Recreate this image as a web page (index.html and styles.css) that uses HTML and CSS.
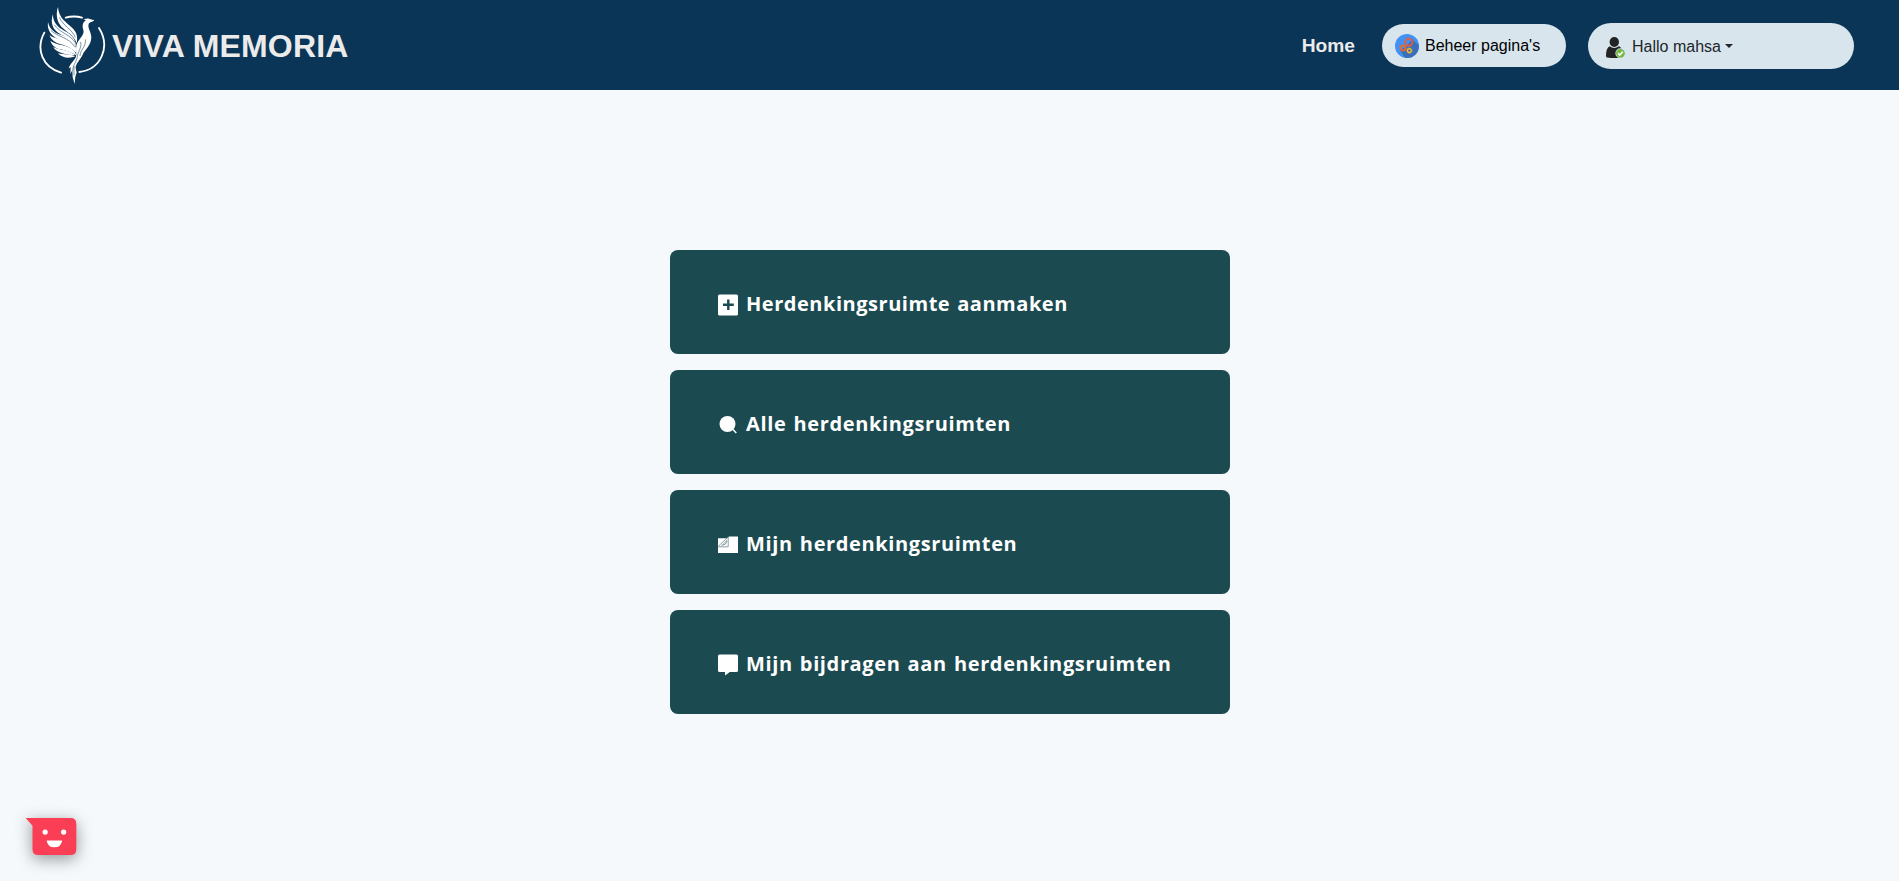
FILE: index.html
```html
<!DOCTYPE html>
<html lang="nl">
<head>
<meta charset="utf-8">
<title>Viva Memoria</title>
<link rel="stylesheet" href="styles.css">
</head>
<body>
<header class="navbar">
  <a class="brand">
    <svg class="brand-logo" viewBox="24 18 204 240" fill="#fff">
      <g fill="none" stroke="#fff" stroke-width="5.5" stroke-linecap="round">
        <path d="M107 53Q132 46 156 53"/>
        <path d="M43 98C16 148 38 202 93 218"/>
        <path d="M207 84C242 140 214 208 148 216"/>
      </g>
      <path d="M84 21C86 54 108 66 127 84C140 96 144 110 140 130C132 104 112 98 94 80C82 66 76 44 84 21Z"/>
      <path d="M69 43C68 68 84 82 104 93C124 103 138 118 138 140C126 116 108 112 90 102C68 90 60 68 69 43Z"/>
      <path d="M54 66C58 88 76 101 100 107C122 112 136 126 139 150C122 128 106 126 88 119C66 110 50 92 54 66Z"/>
      <path d="M58 106C76 117 98 118 112 124C130 131 140 144 141 160C124 144 108 137 92 133C76 129 64 120 58 106Z"/>
      <path d="M61 122C80 135 98 134 112 140C126 145 136 152 139 166C120 156 108 151 92 148C76 145 65 135 61 122Z"/>
      <path d="M69 141C88 151 112 147 136 166C114 163 84 163 69 141Z"/>
      <path d="M84 160C104 165 120 161 136 169C120 176 96 175 84 160Z"/>
      <path d="M193 60C182 60 178 54 170 56L160 57L168 61C158 66 156 78 160 90C164 104 150 114 142 128C134 144 142 158 138 170C132 184 120 190 116 205L122 202L121 222L127 210L128 232L134 252L136 230L140 218L137 205C136 192 150 180 158 164C164 150 184 136 184 112C184 96 172 84 176 72C179 65 188 67 193 60Z"/>
      <g fill="none" stroke="#0b3556" stroke-width="1.6">
        <path d="M88 52C98 76 126 88 136 112M73 74C88 98 122 104 136 128M62 91C84 111 116 112 134 140"/>
        <path d="M151 126C158 140 142 156 142 172C138 188 128 196 128 212M166 118C170 138 150 150 150 168M132 198L132 226"/>
      </g>
    </svg>
    <span class="brand-name">VIVA MEMORIA</span>
  </a>
  <nav class="menu">
    <a class="menu-home">Home</a>
    <a class="pill pill-pages">
      <svg class="icon-gears" viewBox="0 0 24 24">
        <defs><clipPath id="disc"><circle cx="12" cy="12" r="12"/></clipPath></defs>
        <circle cx="12" cy="12" r="12" fill="#4291f4"/>
        <path clip-path="url(#disc)" d="M17 5L30 17V30H14L5 16L12 12Z" fill="#3b70b8"/>
        <circle cx="13.8" cy="8.2" r="3.4" fill="none" stroke="#ef5b32" stroke-width="1.5"/>
        <circle cx="13.8" cy="8.2" r="4.3" fill="none" stroke="#ef5b32" stroke-width="1" stroke-dasharray="1.6 1.78"/>
        <circle cx="8" cy="14" r="2.4" fill="none" stroke="#f4691f" stroke-width="1.5"/>
        <circle cx="8" cy="14" r="3.2" fill="none" stroke="#f4691f" stroke-width=".9" stroke-dasharray="1.25 1.26"/>
        <circle cx="14.4" cy="16.6" r="1.9" fill="none" stroke="#fbbc24" stroke-width="1.3"/>
        <circle cx="14.4" cy="16.6" r="2.6" fill="none" stroke="#fbbc24" stroke-width=".8" stroke-dasharray="1 1.04"/>
      </svg>
      <span>Beheer pagina's</span>
    </a>
    <a class="pill pill-user">
      <svg class="icon-user" viewBox="0 0 19 21">
        <ellipse cx="8.3" cy="5" rx="4.7" ry="5" fill="#212324"/>
        <path d="M3.6 9.2Q8.3 12.8 12.8 9.2Q16 10.5 16.2 15V20.6Q8 21.6 1 20.6Q0 20.4 0 18.5Q0 11 3.6 9.2Z" fill="#212324"/>
        <circle cx="14.4" cy="16.3" r="5" fill="#d8e5ed"/>
        <circle cx="14.4" cy="16.3" r="4.4" fill="#74b944"/>
        <path d="M12.1 16.3L13.8 18L16.8 14.7" fill="none" stroke="#fff" stroke-width="1.7"/>
      </svg>
      <span class="user-text">Hallo mahsa</span>
      <span class="caret"></span>
    </a>
  </nav>
</header>

<main class="choices">
  <a class="card">
    <svg class="card-icon" viewBox="0 0 20 22"><path fill="#fff" fill-rule="evenodd" d="M1.500 .5H18.500Q20 .5 20 2V20Q20 21.500 18.500 21.500H1.500Q0 21.500 0 20V2Q0 .5 1.500 .5ZM9.100 5.500V9.600H5V11.900H9.100V16H11.500V11.900H15.800V9.600H11.500V5.500Z"/></svg>
    <span class="label label-create">Herdenkingsruimte aanmaken</span>
  </a>
  <a class="card">
    <svg class="card-icon" viewBox="0 0 20 22"><circle cx="9.500" cy="10" r="8" fill="#fff"/><path d="M14 14.500L18.300 19" stroke="#fff" stroke-width="1.500"/></svg>
    <span class="label">Alle herdenkingsruimten</span>
  </a>
  <a class="card">
    <svg class="card-icon" viewBox="0 0 20 22"><path fill="#fff" d="M0 4.300H9L11 2.500H20V19H0Z"/><path fill="none" stroke="#6d898c" stroke-width=".8" d="M.3 12.200L10.200 3V12.800H0M3 12.400L9 6.500Q8.500 10.300 6 10.800H4.500"/></svg>
    <span class="label">Mijn herdenkingsruimten</span>
  </a>
  <a class="card">
    <svg class="card-icon" viewBox="0 0 20 22"><path fill="#fff" d="M1.500 .5H18.500Q20 .5 20 2V16.500Q20 18 18.500 18H11.800L7 21.500V18H1.500Q0 18 0 16.500V2Q0 .5 1.500 .5Z"/></svg>
    <span class="label">Mijn bijdragen aan herdenkingsruimten</span>
  </a>
</main>

<button class="chat" aria-label="Chat">
  <svg class="chat-icon" viewBox="0 0 52 38">
    <path d="M0 0H46Q52 0 52 6V32Q52 38 46 38H13Q7 38 7 32V8Z" fill="#f93e56"/>
    <circle cx="20" cy="14.500" r="2.700" fill="#fff"/><circle cx="39" cy="14.500" r="2.700" fill="#fff"/>
    <path d="M21.500 23H37.500Q36.500 30 29.500 30Q22.500 30 21.500 23Z" fill="#fff"/>
  </svg>
</button>
</body>
</html>
```
FILE: styles.css
```css
* { box-sizing: border-box; }
body {
  margin: 0;
  min-height: 881px;
  background: #f5f9fc;
  font: 16px/24px "Liberation Sans", Arial, sans-serif;
  color: #212529;
}
.navbar {
  display: flex;
  align-items: center;
  justify-content: space-between;
  height: 90px;
  padding: 0 45px 0 38px;
  background: #0b3556;
}
.brand { display: flex; align-items: center; gap: 6px; padding-top: 2px; }
.brand-logo { width: 68px; height: 80px; }
.brand-name { font-size: 32px; font-weight: 700; line-height: 40px; letter-spacing: .15px; color: #ebebeb; }
.menu { display: flex; align-items: center; padding-top: 2px; }
.menu-home { margin-right: 27px; font-size: 19.2px; font-weight: 700; color: #ebebeb; }
.pill { display: flex; align-items: center; border-radius: 23px; background: #d8e5ed; }
.pill-pages { width: 184px; height: 43px; margin: 0 22px 1px 0; padding-left: 13px; gap: 6px; color: #000; }
.pill-user { width: 266px; height: 46px; padding-left: 18px; }
.user-text { padding-top: 1px; }
.icon-gears { width: 24px; height: 24px; }
.icon-user { width: 19px; height: 21px; margin: 2px 7px 0 0; }
.caret {
  margin: 0 0 0 4px;
  border-top: 4.8px solid #212529;
  border-left: 4.8px solid transparent;
  border-right: 4.8px solid transparent;
}
.choices {
  display: flex;
  flex-direction: column;
  gap: 16px;
  width: 560px;
  margin: 160px auto 0;
}
.card {
  display: flex;
  align-items: center;
  height: 104px;
  padding: 4px 0 0 48px;
  border-radius: 8px;
  background: #1b4a50;
}
.card-icon { width: 20px; height: 22px; margin: 2px 8.5px 0 0; overflow: visible; }
.label {
  font: 700 20px/30px "Open Sans", "Noto Sans", sans-serif;
  letter-spacing: .63px;
  word-spacing: 1.3px;
  color: #fff;
  white-space: nowrap;
}
.label-create { letter-spacing: .53px; }
.chat {
  position: fixed;
  left: 25px;
  bottom: 26px;
  padding: 0;
  border: 0;
  background: none;
}
.chat-icon {
  display: block;
  width: 52px;
  height: 37px;
  overflow: visible;
  filter: drop-shadow(0 4px 8px rgba(0, 0, 0, .4));
}
```
